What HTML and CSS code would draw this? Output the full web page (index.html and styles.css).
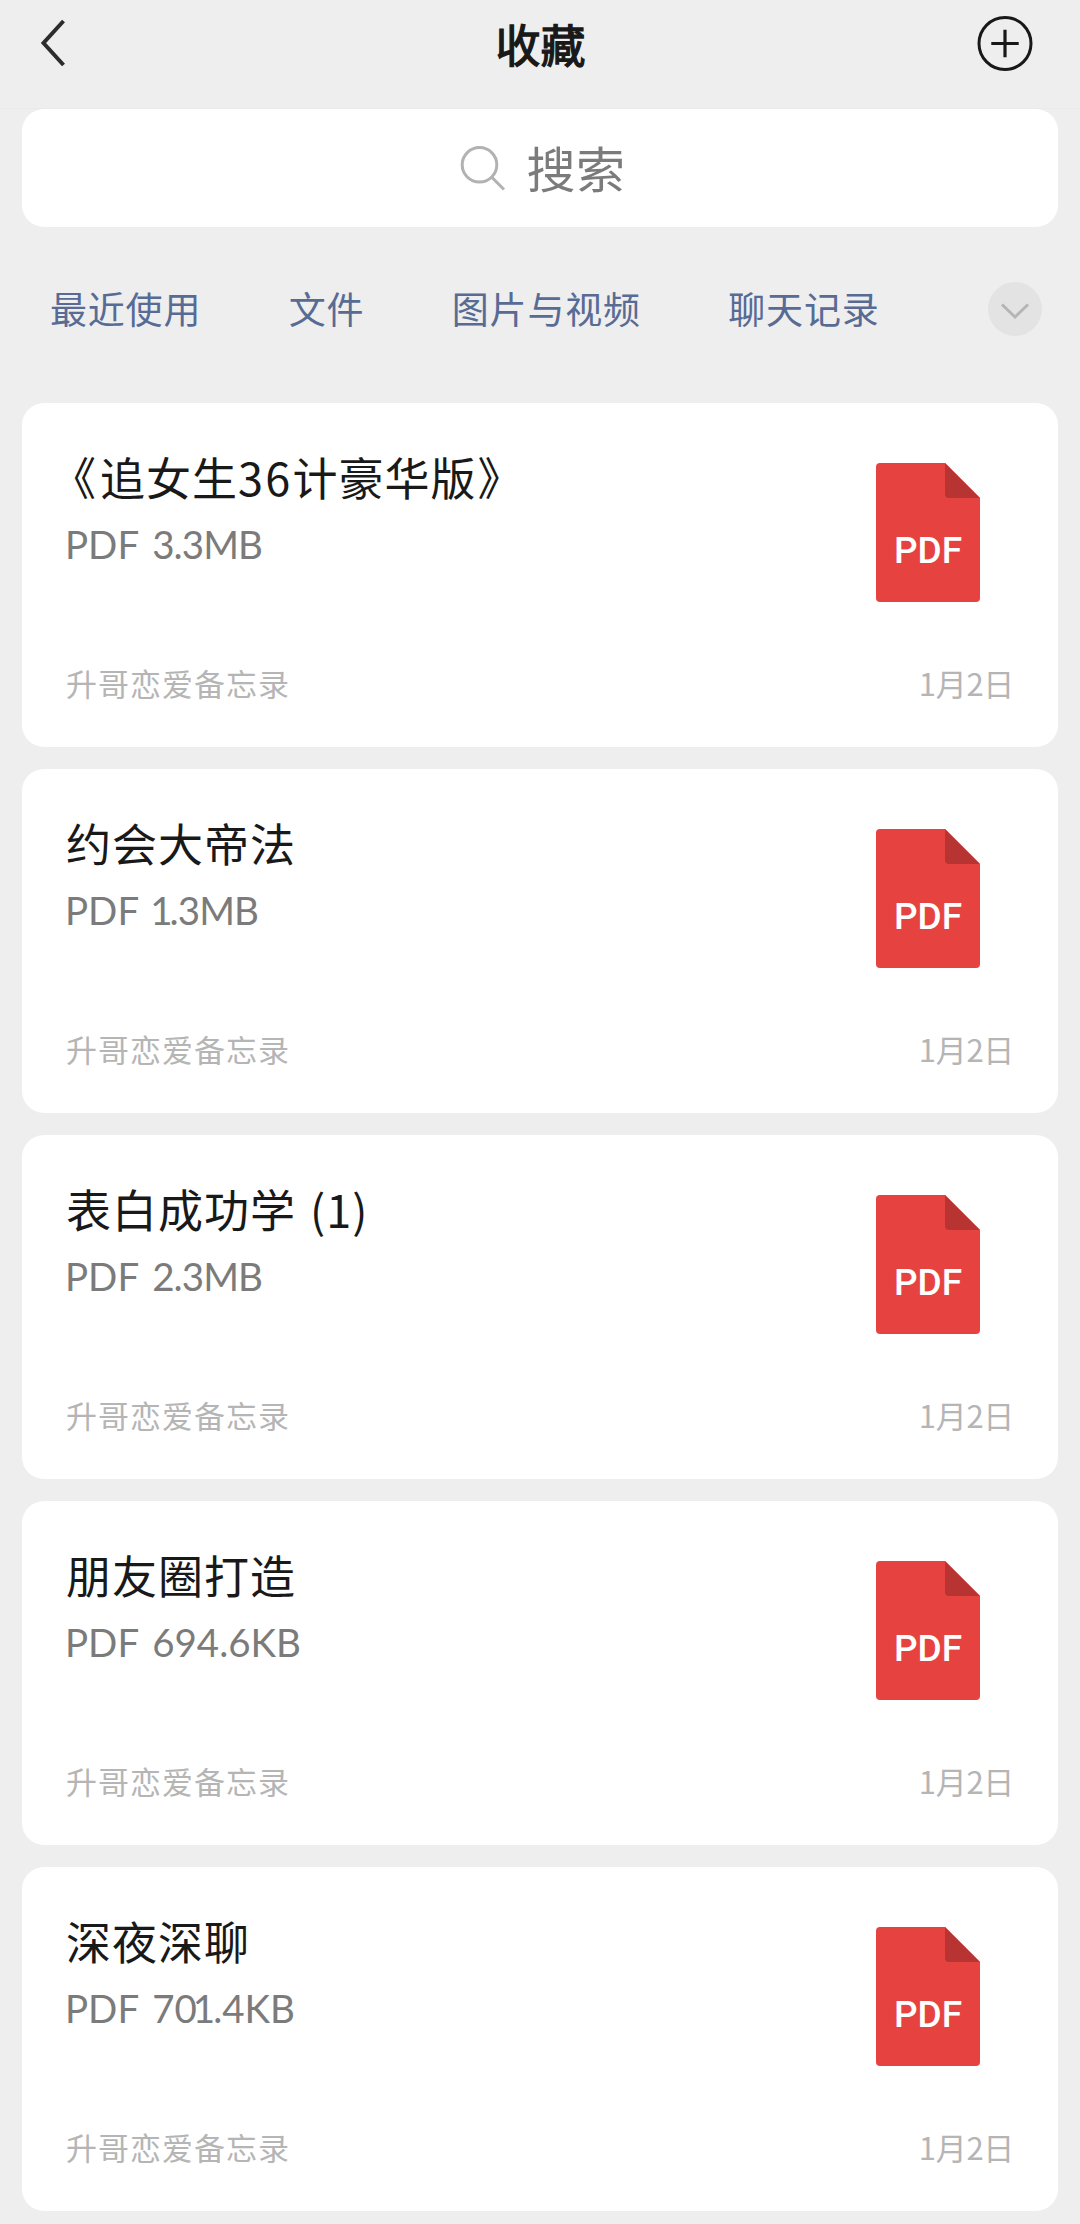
FILE: index.html
```html
<!DOCTYPE html>
<html lang="zh-CN">
<head>
<meta charset="utf-8">
<title>收藏</title>
<link rel="stylesheet" href="styles.css">
</head>
<body>
<header class="header">
  <svg class="back" viewBox="0 0 28 50" width="28" height="50"><path d="M23.500 3 L3.500 25 L23.500 47" fill="none" stroke="#2c2c2c" stroke-width="4"/></svg>
  <h1 class="heading">收藏</h1>
  <svg class="add" viewBox="0 0 56 56" width="56" height="56" fill="none" stroke="#181818"><circle cx="28" cy="28.500" r="26" stroke-width="3"/><path d="M28 14.800V42.200M14.300 28.500H41.700" stroke-width="3.200"/></svg>
</header>
<div class="search">
  <svg viewBox="0 0 46 46" width="46" height="46" fill="none" stroke="#b2b2b2" stroke-width="3"><circle cx="19.500" cy="19.800" r="17.300"/><path d="M31.800 32.200L44 44.500"/></svg>
  <span class="search-label">搜索</span>
</div>
<nav class="tabs">
  <span class="tab">最近使用</span>
  <span class="tab">文件</span>
  <span class="tab">图片与视频</span>
  <span class="tab">聊天记录</span>
  <svg class="more" viewBox="0 0 54 54" width="54" height="54"><circle cx="27" cy="27" r="27" fill="#e3e3e3"/><path d="M14 22.500L27 35L40 22.500" fill="none" stroke="#b5b5b5" stroke-width="3"/></svg>
</nav>
<main class="list">
  <article class="card">
    <div class="body">
      <div class="info"><h2 class="title"><span class="open-quote">《</span>追女生<span class="digits">36</span>计豪华版<span class="close-quote">》</span></h2><p class="size">PDF <span class="mega">3.3MB</span></p></div>
      <svg class="file" viewBox="0 0 104 139" width="104" height="139"><path d="M4 0H69L104 35V135a4 4 0 0 1-4 4H4a4 4 0 0 1-4-4V4a4 4 0 0 1 4-4Z" fill="#e64340"/><path d="M69 0L104 35H73a4 4 0 0 1-4-4Z" fill="#b83433"/><text class="file-type" x="52" y="99.500">PDF</text></svg>
    </div>
    <footer class="meta"><span>升哥恋爱备忘录</span><time>1月2日</time></footer>
  </article>
  <article class="card">
    <div class="body">
      <div class="info"><h2 class="title">约会大帝法</h2><p class="size">PDF <span class="mega"><span class="one">1</span>.3MB</span></p></div>
      <svg class="file" viewBox="0 0 104 139" width="104" height="139"><path d="M4 0H69L104 35V135a4 4 0 0 1-4 4H4a4 4 0 0 1-4-4V4a4 4 0 0 1 4-4Z" fill="#e64340"/><path d="M69 0L104 35H73a4 4 0 0 1-4-4Z" fill="#b83433"/><text class="file-type" x="52" y="99.500">PDF</text></svg>
    </div>
    <footer class="meta"><span>升哥恋爱备忘录</span><time>1月2日</time></footer>
  </article>
  <article class="card">
    <div class="body">
      <div class="info"><h2 class="title">表白成功学 (1)</h2><p class="size">PDF <span class="mega">2.3MB</span></p></div>
      <svg class="file" viewBox="0 0 104 139" width="104" height="139"><path d="M4 0H69L104 35V135a4 4 0 0 1-4 4H4a4 4 0 0 1-4-4V4a4 4 0 0 1 4-4Z" fill="#e64340"/><path d="M69 0L104 35H73a4 4 0 0 1-4-4Z" fill="#b83433"/><text class="file-type" x="52" y="99.500">PDF</text></svg>
    </div>
    <footer class="meta"><span>升哥恋爱备忘录</span><time>1月2日</time></footer>
  </article>
  <article class="card">
    <div class="body">
      <div class="info"><h2 class="title">朋友圈打造</h2><p class="size">PDF 694.6KB</p></div>
      <svg class="file" viewBox="0 0 104 139" width="104" height="139"><path d="M4 0H69L104 35V135a4 4 0 0 1-4 4H4a4 4 0 0 1-4-4V4a4 4 0 0 1 4-4Z" fill="#e64340"/><path d="M69 0L104 35H73a4 4 0 0 1-4-4Z" fill="#b83433"/><text class="file-type" x="52" y="99.500">PDF</text></svg>
    </div>
    <footer class="meta"><span>升哥恋爱备忘录</span><time>1月2日</time></footer>
  </article>
  <article class="card">
    <div class="body">
      <div class="info"><h2 class="title">深夜深聊</h2><p class="size">PDF 70<span class="one">1</span>.4KB</p></div>
      <svg class="file" viewBox="0 0 104 139" width="104" height="139"><path d="M4 0H69L104 35V135a4 4 0 0 1-4 4H4a4 4 0 0 1-4-4V4a4 4 0 0 1 4-4Z" fill="#e64340"/><path d="M69 0L104 35H73a4 4 0 0 1-4-4Z" fill="#b83433"/><text class="file-type" x="52" y="99.500">PDF</text></svg>
    </div>
    <footer class="meta"><span>升哥恋爱备忘录</span><time>1月2日</time></footer>
  </article>
</main>
</body>
</html>
```
FILE: styles.css
```css
* { box-sizing: border-box; margin: 0; padding: 0; }
body {
  background: #eee;
  font-family: "Noto Sans CJK SC", sans-serif;
  color: #191919;
  height: 2224px;
  overflow: hidden;
}
svg { display: block; flex: none; }
.header {
  height: 109px;
  padding: 15px 47px 0 40px;
  border-bottom: 1px solid #eaeaea;
  display: grid;
  grid-template-columns: 1fr auto 1fr;
  align-items: start;
}
.back { margin-top: 3px; }
.heading {
  font-size: 45px;
  line-height: 57px;
  font-weight: 400;
  -webkit-text-stroke: 1.3px #191919;
  margin: 0 -4px 0 4px;
}
.add { justify-self: end; }
.search {
  height: 118px;
  margin: 0 22px;
  background: #fff;
  border-radius: 22px;
  display: flex;
  align-items: center;
  justify-content: center;
  gap: 20px;
  padding-left: 6px;
}
.search-label { font-size: 49px; line-height: 70px; letter-spacing: 0.5px; color: #7b7b7b; margin-top: -2px; }
.tabs {
  height: 176px;
  padding: 0 38px 12px 50px;
  display: flex;
  align-items: center;
}
.tab {
  font-size: 37px;
  line-height: 54px;
  letter-spacing: 0.8px;
  color: #576b95;
  margin: -2px 87.5px 0 0;
}
.more { margin-left: auto; }
.list { padding: 0 22px; display: flex; flex-direction: column; gap: 22px; }
.card {
  height: 344px;
  background: #fff;
  border-radius: 22px;
  padding: 44px 44px 44px;
  display: flex;
  flex-direction: column;
  justify-content: space-between;
}
.body { display: flex; justify-content: space-between; }
.title { font-size: 45px; line-height: 60px; font-weight: 400; letter-spacing: 1px; word-spacing: 3px; white-space: nowrap; }
.open-quote { margin: 0 3px 0 -15px; }
.digits { letter-spacing: 2.2px; }
.close-quote { margin-left: 1px; }
.size {
  font-family: Lato, sans-serif;
  font-size: 38.5px;
  line-height: 50px;
  margin: 12px 0 0 -1px;
  word-spacing: 4px;
  color: #7b7b7b;
}
.mega { letter-spacing: -0.9px; }
.one { margin: 0 -2px 0 -4px; }
.mega .one { margin-left: -2px; }
.file { margin: 16px 34px 0 0; }
.file-type {
  font: 500 37px Roboto, sans-serif;
  fill: #fff;
  text-anchor: middle;
}
.meta {
  display: flex;
  justify-content: space-between;
  font-size: 31px;
  line-height: 40px;
  letter-spacing: 1px;
  color: #b5b5b5;
}
.meta time { letter-spacing: -0.3px; }
```
